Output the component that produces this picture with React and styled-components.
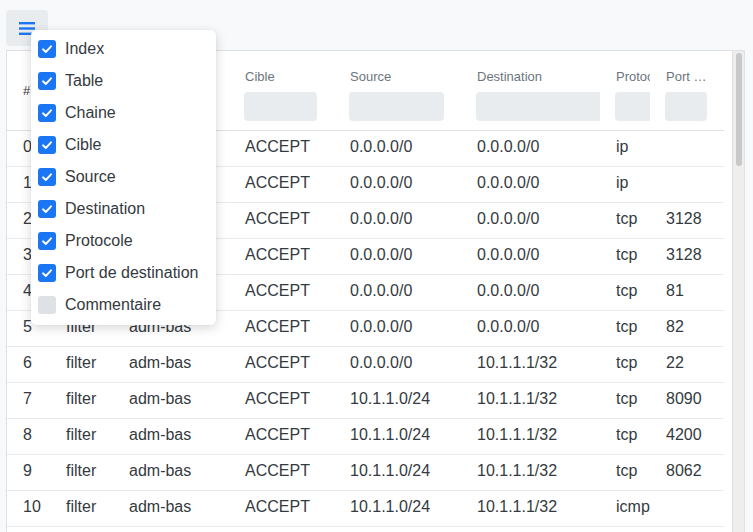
import React from "react";
import styled, { createGlobalStyle } from "styled-components";

const Global = createGlobalStyle`
  html, body { margin: 0; height: 100%; overflow: hidden; }
  body {
    background: #f8f9fa;
    font-family: "Liberation Sans", Arial, sans-serif;
    color: #343a40;
    padding: 10px 8px 0 6px;
    box-sizing: border-box;
  }
`;

const Toolbar = styled.div`
  position: relative;
  display: flex;
  margin-bottom: 4px;
`;

const MenuButton = styled.button`
  width: 42px;
  height: 36px;
  border: none;
  border-radius: 4px;
  background: #e9ecef;
  display: flex;
  align-items: center;
  justify-content: center;
  padding: 0;
  cursor: pointer;
`;

const Menu = styled.div`
  position: absolute;
  left: 25px;
  top: 20px;
  width: 185px;
  background: #fff;
  border-radius: 5px;
  box-shadow: 0 3px 12px rgba(0, 0, 0, 0.16), 0 0 1px rgba(0, 0, 0, 0.12);
  padding: 3px 0 4px;
  z-index: 10;
`;

const MenuItem = styled.label`
  display: flex;
  align-items: center;
  gap: 9px;
  height: 32px;
  padding: 0 7px;
  font-size: 16px;
  color: #343a40;
  white-space: nowrap;
`;

const Box = styled.span`
  width: 18px;
  height: 18px;
  border-radius: 3px;
  background: ${(p) => (p.$checked ? "#1a76f2" : "#dee2e6")};
  display: flex;
  align-items: center;
  justify-content: center;
  flex: none;
`;

const Panel = styled.div`
  height: 500px;
  display: flex;
  background: #fff;
  border: 1px solid #dee2e6;
  overflow: hidden;
`;

const Viewport = styled.div`
  flex: 1;
  min-width: 0;
  overflow: hidden;
`;

const ScrollTrack = styled.div`
  width: 11px;
  flex: none;
  background: #efeeec;
  border-left: 1px solid #e2e0de;
  display: flex;
  justify-content: center;
  padding-top: 2px;
`;

const ScrollThumb = styled.div`
  width: 6px;
  height: 113px;
  border-radius: 3px;
  background: #c9c9c9;
`;

const Table = styled.table`
  border-collapse: collapse;
  table-layout: fixed;
  width: 717px;
`;

const Th = styled.th`
  text-align: left;
  vertical-align: ${(p) => (p.$center ? "middle" : "top")};
  padding: ${(p) => (p.$center ? "0 16px 2px" : "17px 16px 9px")};
  overflow: hidden;
  font-weight: normal;
  border-bottom: 1px solid #dee2e6;
`;

const HeadInner = styled.div`
  width: ${(p) => p.$w}px;
  display: flex;
  flex-direction: column;
  gap: 6px;
`;

const HeadTitle = styled.div`
  font-size: 13px;
  line-height: 18px;
  color: #6c757d;
  white-space: nowrap;
  overflow: hidden;
  text-overflow: ellipsis;
`;

const HashTitle = styled.span`
  font-size: 13px;
  color: #343a40;
`;

const Filter = styled.div`
  height: 29px;
  width: ${(p) => p.$w}px;
  border-radius: 4px;
  background: #e9ecef;
  margin-left: -1px;
`;

const Td = styled.td`
  height: 32px;
  padding: 0 16px 3px;
  font-size: 16px;
  color: #343a40;
  white-space: nowrap;
  overflow: hidden;
  border-bottom: 1px solid #e9ecef;
`;

const columns = [
  { key: "idx", label: "Index", title: "#", width: 43, checked: true },
  { key: "table", label: "Table", title: "Table", width: 63, head: 31, filter: 31, checked: true },
  { key: "chain", label: "Chaine", title: "Chaine", width: 116, head: 84, filter: 84, checked: true },
  { key: "target", label: "Cible", title: "Cible", width: 105, head: 73, filter: 73, checked: true },
  { key: "src", label: "Source", title: "Source", width: 127, head: 95, filter: 95, checked: true },
  { key: "dst", label: "Destination", title: "Destination", width: 139, head: 140, filter: 140, checked: true },
  { key: "proto", label: "Protocole", title: "Protocole", width: 50, head: 64, filter: 50, checked: true },
  { key: "port", label: "Port de destination", title: "Port de destination", width: 74, head: 42, filter: 42, checked: true },
];

const menuItems = [...columns.map((c) => ({ label: c.label, checked: c.checked })), { label: "Commentaire", checked: false }];

const base = [
  ["0.0.0.0/0", "0.0.0.0/0", "ip", ""],
  ["0.0.0.0/0", "0.0.0.0/0", "ip", ""],
  ["0.0.0.0/0", "0.0.0.0/0", "tcp", "3128"],
  ["0.0.0.0/0", "0.0.0.0/0", "tcp", "3128"],
  ["0.0.0.0/0", "0.0.0.0/0", "tcp", "81"],
  ["0.0.0.0/0", "0.0.0.0/0", "tcp", "82"],
  ["0.0.0.0/0", "10.1.1.1/32", "tcp", "22"],
  ["10.1.1.0/24", "10.1.1.1/32", "tcp", "8090"],
  ["10.1.1.0/24", "10.1.1.1/32", "tcp", "4200"],
  ["10.1.1.0/24", "10.1.1.1/32", "tcp", "8062"],
  ["10.1.1.0/24", "10.1.1.1/32", "icmp", ""],
];
const extraPorts = ["5432", "443", "80", "8080", "3306", "53", "123", "9000", "6379", "25"];
const rows = Array.from({ length: 14 }, (_, i) => {
  const b = base[i] || ["10.1.1.0/24", "10.1.1.1/32", "tcp", extraPorts[i % extraPorts.length]];
  return { idx: i, table: "filter", chain: "adm-bas", target: "ACCEPT", src: b[0], dst: b[1], proto: b[2], port: b[3] };
});

const HamburgerIcon = () => (
  <svg width="16" height="13" viewBox="0 0 16 13" fill="#1a76f2" aria-hidden="true">
    <rect x="0" y="0" width="16" height="2.4" />
    <rect x="0" y="5.3" width="16" height="2.4" />
    <rect x="0" y="10.6" width="16" height="2.4" />
  </svg>
);

const CheckIcon = () => (
  <svg width="18" height="18" viewBox="0 0 18 18" fill="none" aria-hidden="true">
    <path d="M5 9.3 L7.8 12 L13 6.3" stroke="#fff" strokeWidth="1.9" strokeLinecap="round" strokeLinejoin="round" />
  </svg>
);

export default function App() {
  return (
    <>
      <Global />
      <Toolbar>
        <MenuButton aria-label="Colonnes">
          <HamburgerIcon />
        </MenuButton>
        <Menu>
          {menuItems.map((m) => (
            <MenuItem key={m.label}>
              <Box $checked={m.checked}>{m.checked && <CheckIcon />}</Box>
              {m.label}
            </MenuItem>
          ))}
        </Menu>
      </Toolbar>
      <Panel>
        <Viewport>
          <Table>
            <colgroup>
              {columns.map((c) => (
                <col key={c.key} style={{ width: c.width }} />
              ))}
            </colgroup>
            <thead>
              <tr>
                {columns.map((c) =>
                  c.filter ? (
                    <Th key={c.key}>
                      <HeadInner $w={c.head}>
                        <HeadTitle>{c.title}</HeadTitle>
                        <Filter $w={c.filter} />
                      </HeadInner>
                    </Th>
                  ) : (
                    <Th key={c.key} $center>
                      <HashTitle>{c.title}</HashTitle>
                    </Th>
                  )
                )}
              </tr>
            </thead>
            <tbody>
              {rows.map((r) => (
                <tr key={r.idx}>
                  {columns.map((c) => (
                    <Td key={c.key}>{r[c.key]}</Td>
                  ))}
                </tr>
              ))}
            </tbody>
          </Table>
        </Viewport>
        <ScrollTrack>
          <ScrollThumb />
        </ScrollTrack>
      </Panel>
    </>
  );
}
